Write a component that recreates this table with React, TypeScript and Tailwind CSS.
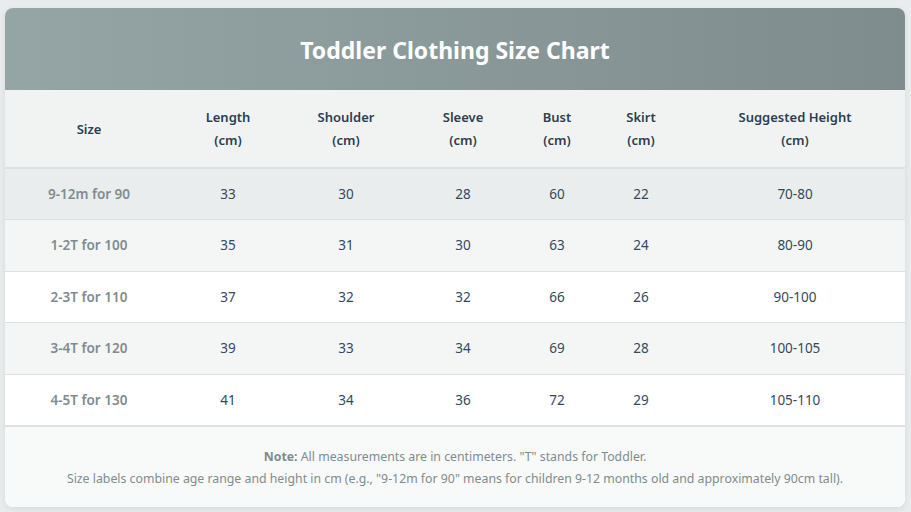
import React from "react";

const rows = [
  ["9-12m for 90", "33", "30", "28", "60", "22", "70-80"],
  ["1-2T for 100", "35", "31", "30", "63", "24", "80-90"],
  ["2-3T for 110", "37", "32", "32", "66", "26", "90-100"],
  ["3-4T for 120", "39", "33", "34", "69", "28", "100-105"],
  ["4-5T for 130", "41", "34", "36", "72", "29", "105-110"],
];

const widths = ["w-[168px]", "w-[110px]", "w-[126px]", "w-[108px]", "w-[80px]", "w-[88px]", "w-[220px]"];

export default function App() {
  const rowBg = (i: number) =>
    i === 0 ? "bg-[#eaeded]" : i % 2 === 1 ? "bg-[#f4f6f6]" : "bg-white";
  return (
    <div
      className="min-h-[512px] w-[911px] bg-[#e9ecec] pt-[8px] pl-[5px]"
      style={{ fontFamily: '"Noto Sans", "Open Sans", sans-serif' }}
    >
      <div className="w-[900px] overflow-hidden rounded-[8px] bg-white shadow-[0_2px_6px_rgba(0,0,0,0.08)]">
        <div className="flex h-[82px] items-center justify-center bg-gradient-to-r from-[#95a5a6] to-[#7f8c8d] pt-[2px]">
          <h1 className="text-[23px] font-bold text-white">Toddler Clothing Size Chart</h1>
        </div>
        <table className="w-[900px] table-fixed border-collapse">
          <colgroup>
            {widths.map((w, i) => (
              <col key={i} className={w} />
            ))}
          </colgroup>
          <thead>
            <tr className="h-[78px] border-b-2 border-[#dde1e1] bg-[#f1f3f3]">
              {[
                ["Size"],
                ["Length", "(cm)"],
                ["Shoulder", "(cm)"],
                ["Sleeve", "(cm)"],
                ["Bust", "(cm)"],
                ["Skirt", "(cm)"],
                ["Suggested Height", "(cm)"],
              ].map((h, i) => (
                <th key={i} className="pt-[1px] text-center text-[13px] font-semibold leading-[23px] text-[#2c3e50]">
                  {h.map((l, j) => (
                    <div key={j}>{l}</div>
                  ))}
                </th>
              ))}
            </tr>
          </thead>
          <tbody>
            {rows.map((r, i) => (
              <tr key={i} className={`h-[51.5px] border-b border-[#dde1e1] ${rowBg(i)}`}>
                {r.map((c, j) => (
                  <td
                    key={j}
                    className={`text-center text-[13.5px] ${
                      j === 0 ? "font-semibold text-[#7f8c8d]" : "text-[#34495e]"
                    }`}
                  >
                    {c}
                  </td>
                ))}
              </tr>
            ))}
          </tbody>
        </table>
        <div className="flex h-[81px] flex-col items-center justify-center border-t border-[#dde1e1] bg-[#f8f9f9] pt-[2px] text-[12.3px] leading-[22px] text-[#7f8c8d]">
          <p>
            <span className="font-bold">Note:</span> All measurements are in centimeters. "T" stands for Toddler.
          </p>
          <p>
            Size labels combine age range and height in cm (e.g., "9-12m for 90" means for children 9-12 months old and approximately 90cm tall).
          </p>
        </div>
      </div>
    </div>
  );
}
